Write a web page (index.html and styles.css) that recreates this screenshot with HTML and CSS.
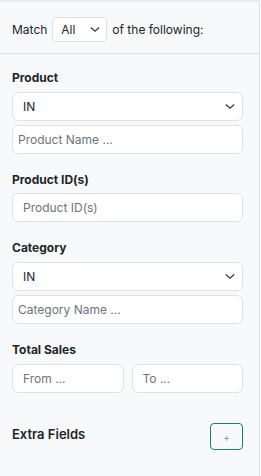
FILE: index.html
```html
<!DOCTYPE html>
<html>
<head>
<meta charset="utf-8">
<link rel="stylesheet" href="styles.css">
</head>
<body>
<div class="panel">
  <div class="match-row">
    <span>Match</span>
    <div class="select small"><span>All</span><svg class="chev" viewBox="0 0 12 8" width="10" height="7"><path d="M1 1.5 L6 6 L11 1.5" fill="none" stroke="#343a40" stroke-width="1.5"/></svg></div>
    <span>of the following:</span>
  </div>
  <div class="body">
    <div class="group">
      <div class="label">Product</div>
      <div class="select"><span>IN</span><svg class="chev" viewBox="0 0 12 8" width="10" height="7"><path d="M1 1.5 L6 6 L11 1.5" fill="none" stroke="#343a40" stroke-width="1.5"/></svg></div>
      <div class="input tight">Product Name ...</div>
    </div>
    <div class="group">
      <div class="label close">Product ID(s)</div>
      <div class="input">Product ID(s)</div>
    </div>
    <div class="group">
      <div class="label">Category</div>
      <div class="select"><span>IN</span><svg class="chev" viewBox="0 0 12 8" width="10" height="7"><path d="M1 1.5 L6 6 L11 1.5" fill="none" stroke="#343a40" stroke-width="1.5"/></svg></div>
      <div class="input tight">Category Name ...</div>
    </div>
    <div class="group">
      <div class="label">Total Sales</div>
      <div class="pair">
        <div class="input">From ...</div>
        <div class="input">To ...</div>
      </div>
    </div>
    <div class="extra">
      <div class="label heading">Extra Fields</div>
      <button class="add">+</button>
    </div>
  </div>
</div>
</body>
</html>
```
FILE: styles.css
```css
html, body {
  margin: 0;
  padding: 0;
  background: #fff;
}
body {
  font-family: Inter, "Noto Sans", sans-serif;
  font-size: 12px;
  color: #212529;
}
.panel {
  width: 259px;
  height: 474px;
  background: #f8f9fa;
  border-top: 2px solid #e9ecef;
  border-right: 1px solid #dee2e6;
}
.match-row {
  display: flex;
  align-items: center;
  gap: 5px;
  padding: 15px 12px 11px;
  border-bottom: 1px solid #dee2e6;
  line-height: 16px;
}
.select {
  display: flex;
  align-items: center;
  justify-content: space-between;
  box-sizing: border-box;
  height: 29px;
  background: #fff;
  border: 1px solid #dee2e6;
  border-radius: 6px;
  padding: 0 7px 0 10px;
}
.select.small {
  width: 55px;
  height: 25px;
  border-radius: 4px;
  padding: 0 6px 0 8px;
}
.chev { display: block; }
.body {
  padding: 16px 16px 0 12px;
  display: flex;
  flex-direction: column;
  gap: 18px;
}
.group {
  display: flex;
  flex-direction: column;
  gap: 4px;
}
.label {
  font-weight: 700;
  font-size: 12px;
  line-height: 16px;
  margin-bottom: 2px;
}
.label.close { margin-bottom: 1px; }
.input {
  height: 29px;
  box-sizing: border-box;
  background: #fff;
  border: 1px solid #dee2e6;
  border-radius: 6px;
  padding: 0 10px;
  display: flex;
  align-items: center;
  color: #6c757d;
}
.input.tight { padding: 0 5px; }
.pair {
  display: grid;
  grid-template-columns: 1fr 1fr;
  gap: 8px;
}
.extra {
  display: flex;
  align-items: flex-start;
  justify-content: space-between;
  margin-top: 12px;
}
.extra .label { margin: 3px 0 0; }
.label.heading { font-size: 13px; font-weight: 600; }
.add {
  width: 33px;
  height: 27px;
  background: transparent;
  border: 1px solid #198754;
  border-radius: 4px;
  color: #6c9f8f;
  font-size: 10px;
  padding: 0;
  font-family: Inter, sans-serif;
}
```
